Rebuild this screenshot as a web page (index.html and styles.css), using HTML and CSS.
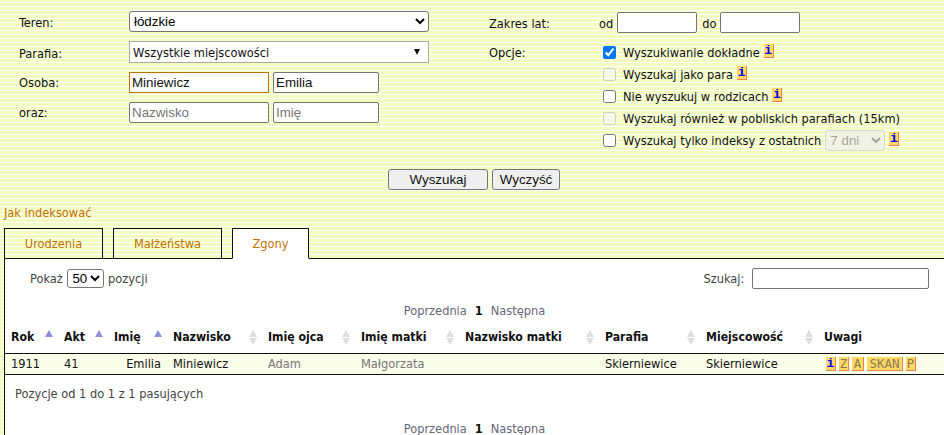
FILE: index.html
```html
<!DOCTYPE html>
<html lang="pl">
<head>
<meta charset="utf-8">
<title>Indeksy</title>
<link rel="stylesheet" href="styles.css">
</head>
<body>
<form class="search">
  <div class="col col-left">
    <div class="row"><label class="lbl">Teren:</label><select class="sel-teren"><option>łódzkie</option></select></div>
    <div class="row"><label class="lbl">Parafia:</label><div class="fake-select"><span>Wszystkie miejscowości</span><i class="tri"></i></div></div>
    <div class="row"><label class="lbl lbl-low">Osoba:</label><input class="inp inp-a focus" value="Miniewicz"><input class="inp inp-b" value="Emilia"></div>
    <div class="row"><label class="lbl lbl-low">oraz:</label><input class="inp inp-a" placeholder="Nazwisko"><input class="inp inp-b" placeholder="Imię"></div>
  </div>
  <div class="col col-right">
    <div class="row"><label class="lbl2">Zakres lat:</label><span class="od">od</span><input class="inp inp-y"><span class="do">do</span><input class="inp inp-y"></div>
    <div class="opts">
      <label class="lbl2 lbl-opt">Opcje:</label>
      <div class="optlist">
        <div class="opt"><input type="checkbox" checked><span>Wyszukiwanie dokładne</span><b class="tag info up">i</b></div>
        <div class="opt"><input type="checkbox" disabled><span>Wyszukaj jako para</span><b class="tag info up">i</b></div>
        <div class="opt"><input type="checkbox"><span>Nie wyszukuj w rodzicach</span><b class="tag info up">i</b></div>
        <div class="opt"><input type="checkbox" disabled><span>Wyszukaj również w pobliskich parafiach (15km)</span></div>
        <div class="opt"><input type="checkbox"><span>Wyszukaj tylko indeksy z ostatnich</span><select class="sel-dni" disabled><option>7 dni</option></select><b class="tag info up">i</b></div>
      </div>
    </div>
  </div>
</form>
<div class="btns"><button type="button" class="btn btn-w">Wyszukaj</button><button type="button" class="btn btn-c">Wyczyść</button></div>
<a class="how">Jak indeksować</a>
<div class="tabs">
  <a class="tab t1">Urodzenia</a><a class="tab t2">Małżeństwa</a><a class="tab t3 active">Zgony</a>
</div>
<section class="panel">
  <div class="tools">
    <div class="show">Pokaż <select class="sel-len"><option>50</option></select> pozycji</div>
    <div class="find">Szukaj: <input class="inp inp-find"></div>
  </div>
  <div class="pager"><span>Poprzednia</span><b>1</b><span>Następna</span></div>
  <table class="grid">
    <thead>
      <tr>
        <th class="c1 asc">Rok</th><th class="c2 asc">Akt</th><th class="c3 asc">Imię</th><th class="c4 both">Nazwisko</th><th class="c5 both">Imię ojca</th><th class="c6 both">Imię matki</th><th class="c7 both">Nazwisko matki</th><th class="c8 both">Parafia</th><th class="c9 both">Miejscowość</th><th class="c10">Uwagi</th>
      </tr>
    </thead>
    <tbody>
      <tr>
        <td>1911</td><td>41</td><td class="right">Emilia</td><td>Miniewicz</td><td class="grey">Adam</td><td class="grey">Małgorzata</td><td></td><td>Skierniewice</td><td>Skierniewice</td>
        <td class="tags"><b class="tag info">i</b><b class="tag">Z</b><b class="tag tag-a">A</b><b class="tag tag-skan">SKAN</b><b class="tag">P</b></td>
      </tr>
    </tbody>
  </table>
  <div class="count">Pozycje od 1 do 1 z 1 pasujących</div>
  <div class="pager pager-b"><span>Poprzednia</span><b>1</b><span>Następna</span></div>
</section>
</body>
</html>
```
FILE: styles.css
```css
* { box-sizing: border-box; }
html, body { margin: 0; height: 435px; overflow: hidden; }
body {
  font: 12.7px/15px "DejaVu Sans Condensed", "DejaVu Sans", sans-serif;
  color: #111;
  background: repeating-linear-gradient(#f2fbc0 0 2px, #fff 2px 3px, #f2fbc0 3px 4px);
  padding: 0 0 0 4px;
}
select, input, button { font: 13.33px "Liberation Sans", sans-serif; margin: 0; }
.search { display: flex; padding-top: 11px; height: 169px; }
.col-left { width: 468px; padding-left: 15px; }
.col-right { flex: 1; padding-left: 17px; padding-top: 1px; }
.row { display: flex; align-items: center; min-height: 21px; margin-bottom: 9px; }
.lbl { width: 110px; padding-top: 2px; }
.lbl-low { padding-top: 0; }
.lbl2 { width: 110px; flex: none; padding-top: 2px; }
.lbl-opt { padding-top: 3px; }
.sel-teren { width: 300px; height: 21px; background: #fff; border: 1px solid #767676; border-radius: 3px; }
.fake-select { width: 300px; height: 22px; background: #fff; border: 1px solid #a9a9a9; display: flex; align-items: center; justify-content: space-between; padding: 0 8px 0 3px; }
.tri { width: 0; height: 0; border-left: 3px solid transparent; border-right: 3px solid transparent; border-top: 6px solid #111; }
.inp { height: 21px; background: #fff; border: 1px solid #767676; border-radius: 2px; padding: 1px 2px; color: #111; }
.inp::placeholder { color: #757575; }
.inp-a { width: 140px; margin-right: 4px; }
.inp-b { width: 106px; }
.focus { border-color: #c07000; border-radius: 0; }
.inp-y { width: 80px; }
.od { margin-right: 4px; padding-top: 1px; }
.do { margin: 0 4px 0 5px; padding-top: 1px; }
.opts { display: flex; }
.optlist { margin-top: -1px; }
.opt { display: flex; align-items: center; height: 22px; padding-left: 4px; }
.opt input { margin: 0 7px 0 0; width: 13px; height: 13px; }
.up { align-self: flex-start; margin-top: 3px; margin-left: 4px; }
.sel-dni { width: 60px; height: 21px; margin-left: 4px; border-radius: 3px; }
.btns { display: flex; justify-content: center; gap: 4px; }
.btn { height: 21px; font-size: 13.33px; padding: 0; background: #efefef; border: 1px solid #767676; border-radius: 3px; color: #111; }
.btn-w { width: 100px; }
.btn-c { width: 68px; }
.how { display: block; margin-top: 15px; color: #c07000; }
.tabs { display: flex; margin-top: 8px; height: 31px; position: relative; z-index: 1; }
.tab { display: flex; align-items: center; justify-content: center; height: 31px; color: #c07000; border: 1px solid #111; }
.t1 { width: 99px; }
.t2 { width: 109px; margin-left: 10px; }
.t3 { width: 77px; margin-left: 10px; background: #fff; border-bottom-color: #fff; }
.panel { background: #fff; border-top: 1px solid #111; border-left: 1px solid #111; margin-top: -1px; height: 180px; color: #444; }
.tools { display: flex; justify-content: space-between; align-items: center; padding: 7px 15px 0 25px; height: 31px; }
.sel-len { height: 19px; margin-left: 1px; border-radius: 3px; background: #fff; }
.inp-find { width: 177px; margin-left: 4px; }
.pager { display: flex; justify-content: center; gap: 8px; margin-top: 13px; color: #667; }
.pager b { color: #111; }
.grid { border-collapse: collapse; table-layout: fixed; width: 939px; margin-top: 7px; color: #111; }
th, td { padding: 0; text-align: left; }
th { height: 28px; font-size: 12.2px; font-weight: bold; padding: 0 0 2px 6px; }
td { height: 21px; padding-left: 6px; background: #fafde8; border-top: 1px solid #111; border-bottom: 1px solid #111; }
.grey { color: #777; }
.right { text-align: right; padding-right: 6px; }
.c1 { width: 53px; } .c2 { width: 50px; } .c3 { width: 59px; } .c4 { width: 95px; } .c5 { width: 93px; } .c6 { width: 104px; } .c7 { width: 140px; } .c8 { width: 101px; } .c9 { width: 118px; } .c10 { width: 126px; }
.asc, .both { position: relative; }
.asc::after { content: ""; position: absolute; right: 5px; top: 5px; border-left: 4.5px solid transparent; border-right: 4.5px solid transparent; border-bottom: 7px solid #8f8fdc; }
.both::before, .both::after { content: ""; position: absolute; right: 5px; border-left: 4.5px solid transparent; border-right: 4.5px solid transparent; }
.both::before { top: 5px; border-bottom: 7px solid #ddd; }
.both::after { top: 13px; border-top: 7px solid #ddd; }
.tags { padding-left: 8px; }
.tag { display: inline-block; height: 14px; min-width: 10px; padding: 0; margin-right: 3px; font: 12.5px/13px "DejaVu Sans Mono", monospace; color: #8a7a50; background: #ffd966; border-right: 1px solid #f08050; border-bottom: 1px solid #f08050; text-align: center; vertical-align: middle; }
.tag-a { min-width: 12px; }
.tag-skan { min-width: 36px; }
.info { color: #00f; font: bold 13px/13px "Liberation Mono", monospace; }
.up.info { margin-right: 0; }
.count { padding: 11px 0 0 10px; }
.pager-b { margin-top: 20px; }
```
